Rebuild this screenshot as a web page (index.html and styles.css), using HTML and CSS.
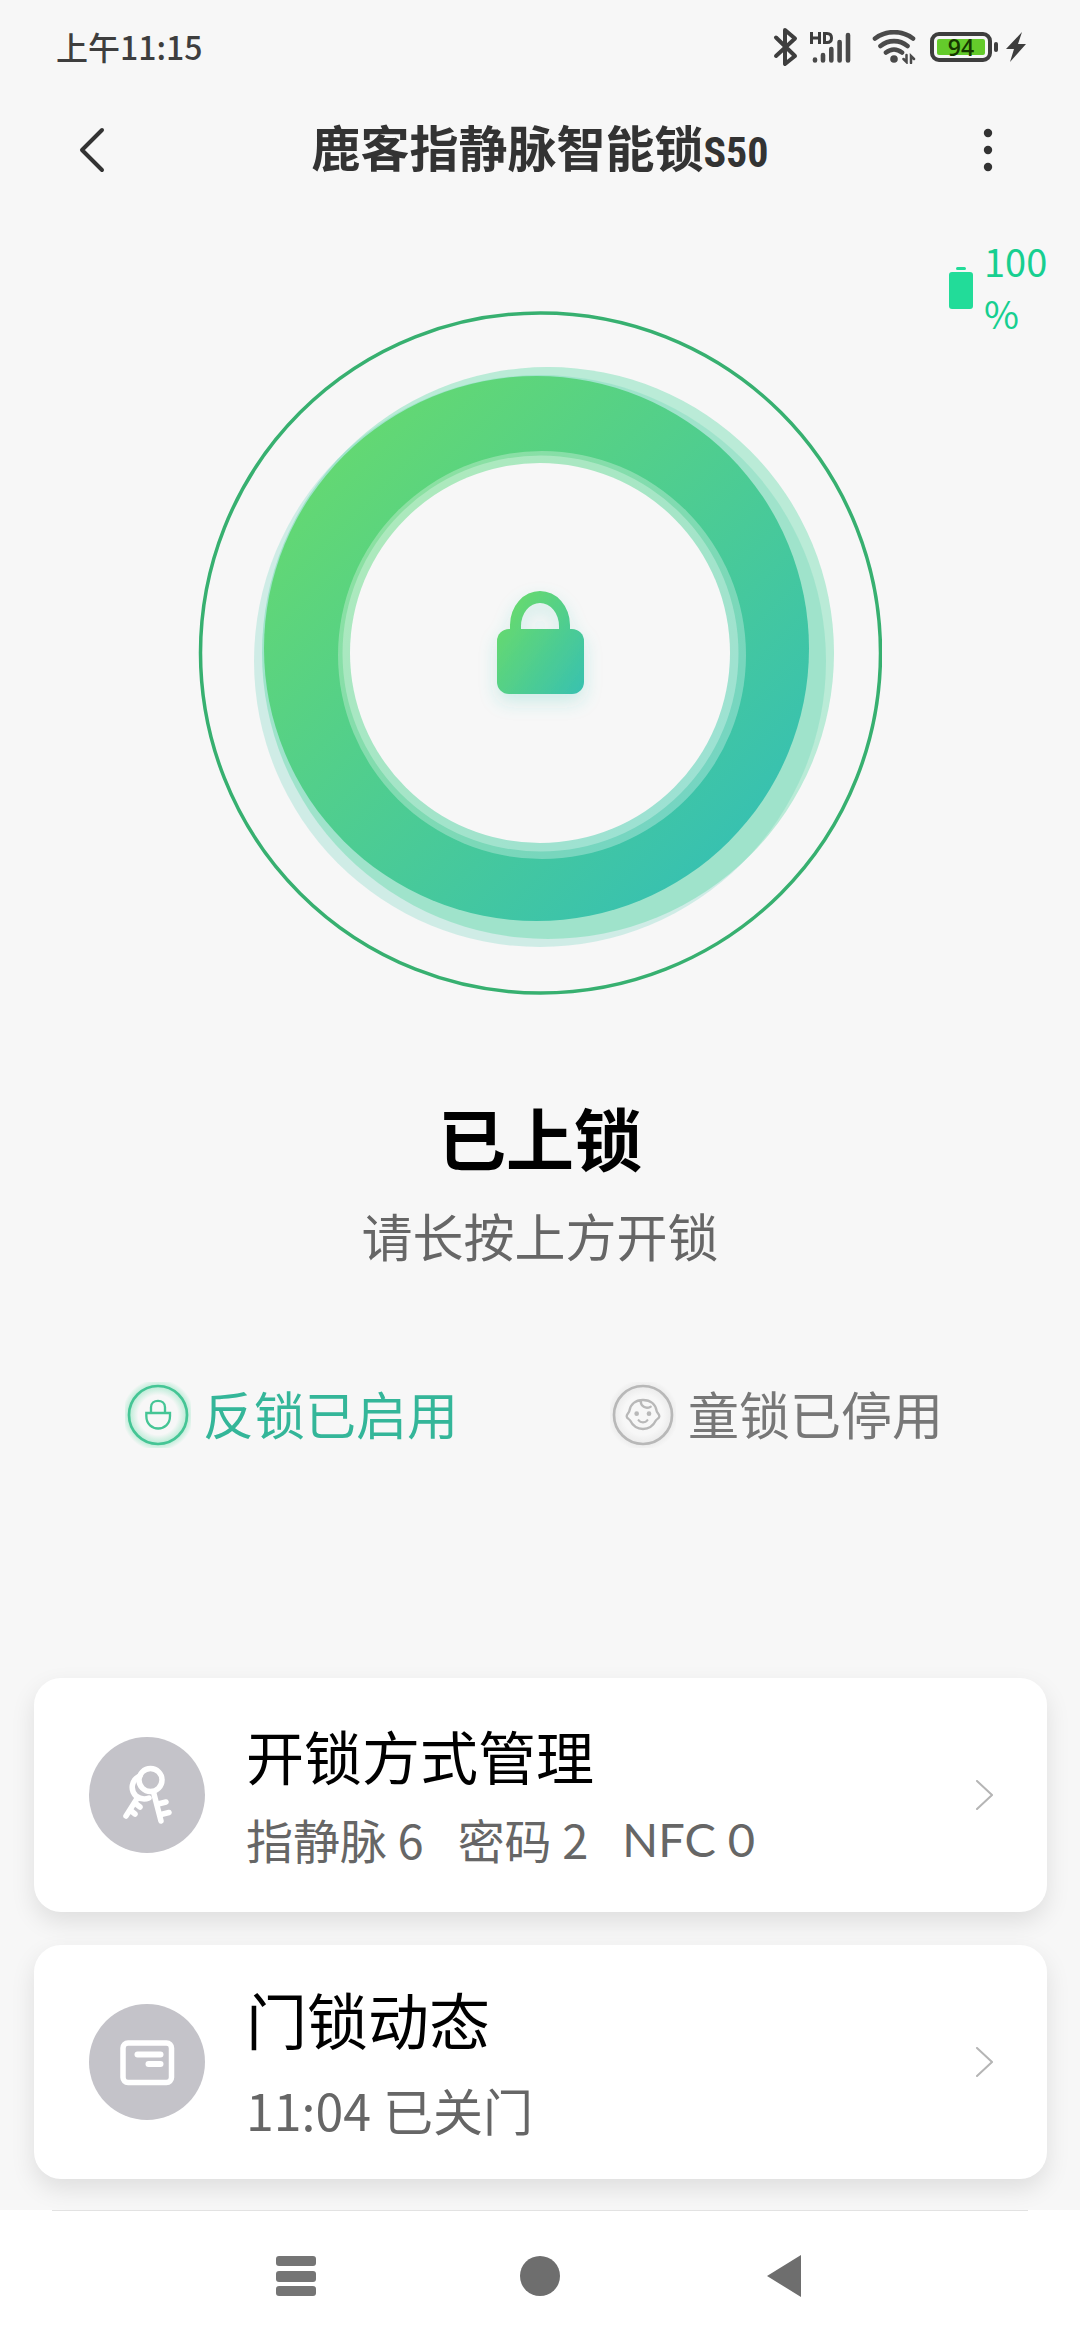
FILE: index.html
```html
<!DOCTYPE html>
<html lang="zh-CN">
<head>
<meta charset="utf-8">
<meta name="viewport" content="width=device-width, initial-scale=1">
<title>鹿客指静脉智能锁S50</title>
<link rel="stylesheet" href="styles.css">
</head>
<body>
<div class="screen">
  <div class="status-bar">
    <span class="clock">上午11:15</span>
    <div class="status-icons">
      <svg class="bluetooth" width="26" height="40" viewBox="0 0 26 40" fill="none" stroke="#3e3e3e" stroke-width="4" stroke-linejoin="round" stroke-linecap="round"><path d="M3 10.500L22 29 12 37V3l10 8.500L3 29"/></svg>
      <svg class="signal" width="42" height="34" viewBox="0 0 42 34"><g fill="none" stroke="#3e3e3e" stroke-width="3"><path d="M2.500 2v12M10.500 2v12M2.500 8h8M15.500 3.500h2.500c4 0 4.500 3 4.500 4.500s-.5 4.500-4.500 4.500h-2.500z"/></g><g fill="none" stroke="#4a4a4a" stroke-width="4.600" stroke-linecap="round"><path d="M6 29.500v1M14 25v5.500M22.300 19v11.500M30.600 12v18.500M39 5v25.500"/></g></svg>
      <svg class="wifi" width="44" height="34" viewBox="0 0 44 34" fill="none" stroke="#4a4a4a" stroke-width="4.600" stroke-linecap="round"><path d="M3 8.500C14 0 30 0 41 8.500M8.500 16c8-6.500 19-6.500 27 0M14 22.500c5-4 11-4 16 0"/><circle cx="22" cy="29" r="3.800" fill="#4a4a4a" stroke="none"/><path d="M34.500 25v7l-3-3M39 33v-7l3 3" stroke-width="2.500"/></svg>
      <div class="phone-battery"><span class="phone-battery-level">94</span></div>
      <svg class="bolt" width="20" height="30" viewBox="0 0 20 30" fill="#3e3e3e"><path d="M16 0L0 17h8L4 30 20 12h-8z"/></svg>
    </div>
  </div>

  <header class="header">
    <button class="icon-button" type="button" aria-label="返回">
      <svg width="28" height="48" viewBox="0 0 28 48" fill="none" stroke="#333" stroke-width="4" stroke-linecap="round" stroke-linejoin="round"><path d="M24 4L4 24l20 20"/></svg>
    </button>
    <h1 class="title">鹿客指静脉智能锁<span class="model">S50</span></h1>
    <button class="icon-button" type="button" aria-label="更多">
      <svg width="10" height="44" viewBox="0 0 10 44" fill="#333"><circle cx="5" cy="5" r="4.200"/><circle cx="5" cy="22" r="4.200"/><circle cx="5" cy="39" r="4.200"/></svg>
    </button>
  </header>

  <main>
    <section class="hero">
      <button class="lock-button" type="button" aria-label="长按开锁">
        <svg class="ring" viewBox="0 0 684 684">
          <defs>
            <linearGradient id="disc" x1="0.140" y1="0.140" x2="0.860" y2="0.860"><stop offset="0" stop-color="#63d873"/><stop offset="1" stop-color="#38c1b0"/></linearGradient>
            <linearGradient id="lock" gradientUnits="userSpaceOnUse" x1="300" y1="325" x2="384" y2="384"><stop offset="0" stop-color="#63d873"/><stop offset="1" stop-color="#38c1b0"/></linearGradient>
            <filter id="glow" x="-50%" y="-50%" width="200%" height="200%"><feDropShadow dx="0" dy="8" stdDeviation="9" flood-color="#38c1b0" flood-opacity="0.220"/></filter>
          </defs>
          <circle cx="342.500" cy="342" r="340" fill="none" stroke="#37b070" stroke-width="3.500"/>
          <circle cx="342" cy="350" r="286" fill="#3cc4ac" fill-opacity="0.210"/>
          <circle cx="350" cy="342" r="286" fill="#43d299" fill-opacity="0.340"/>
          <circle cx="338.500" cy="337.500" r="272.500" fill="url(#disc)"/>
          <circle cx="344" cy="344" r="204" fill="#fff" fill-opacity="0.290"/>
          <circle cx="342.500" cy="342.500" r="198" fill="#fff" fill-opacity="0.290"/>
          <circle cx="342" cy="342" r="190" fill="#f7f7f7"/>
          <g fill="url(#lock)" filter="url(#glow)">
            <path d="M312 322v-8a30 34 0 0 1 60 0v8h-11v-7a19 23 0 0 0-38 0v7z"/>
            <rect x="299" y="318" width="87" height="65" rx="12"/>
          </g>
        </svg>
      </button>
      <div class="lock-battery">
        <svg width="24" height="42" viewBox="0 0 24 42" fill="#22dc99"><rect x="7" y="0" width="10" height="3" rx="1.500"/><rect y="5" width="24" height="37" rx="3"/></svg>
        <span class="lock-battery-text">100 %</span>
      </div>
    </section>

    <h2 class="state">已上锁</h2>
    <p class="hint">请长按上方开锁</p>

    <div class="modes">
      <div class="mode mode-on">
        <svg class="mode-icon" viewBox="0 0 198 198" fill="none" stroke="#45c595" stroke-width="8">
          <defs><radialGradient id="halo-on"><stop offset="0.550" stop-color="#45d596" stop-opacity="0"/><stop offset="0.800" stop-color="#45d596" stop-opacity="0.350"/><stop offset="1" stop-color="#45d596" stop-opacity="0"/></radialGradient></defs>
          <circle cx="99" cy="99" r="108" fill="url(#halo-on)" stroke="none"/>
          <circle cx="99" cy="99" r="87"/>
          <path stroke-width="7" d="M78 91V76c0-26 42-26 42 0v15M64 93h71v9c0 50-71 50-71 0z"/>
        </svg>
        <span>反锁已启用</span>
      </div>
      <div class="mode mode-off">
        <svg class="mode-icon" viewBox="0 0 198 198" fill="none" stroke="#b8b8b8" stroke-width="8">
          <defs><radialGradient id="halo-off"><stop offset="0.550" stop-color="#bbb" stop-opacity="0"/><stop offset="0.800" stop-color="#bbb" stop-opacity="0.200"/><stop offset="1" stop-color="#bbb" stop-opacity="0"/></radialGradient></defs>
          <circle cx="99" cy="99" r="108" fill="url(#halo-off)" stroke="none"/>
          <circle cx="99" cy="99" r="87"/>
          <g stroke-width="7" stroke-linecap="round"><path d="M99 54c-24 0-38 14-41 33-1 6-8 9-8 16s7 7 10 12c8 16 22 26 39 26s31-10 39-26c3-5 10-5 10-12s-7-10-8-16c-3-19-17-33-41-33zM92 56c0 17 15 26 30 18M86 115c6 8 20 8 26 0"/></g>
          <g fill="#b8b8b8" stroke="none"><circle cx="80" cy="95" r="7"/><circle cx="117" cy="95" r="7"/></g>
        </svg>
        <span>童锁已停用</span>
      </div>
    </div>

    <nav class="cards">
      <a class="card" href="#unlock-methods">
        <svg class="card-icon" viewBox="0 0 116 116" fill="none" stroke="#fff" stroke-width="5.500" stroke-linecap="round" stroke-linejoin="round">
          <circle cx="58" cy="58" r="58" fill="#c4c3c9" stroke="none"/>
          <path d="M51 39c-9 4-10 14-4 20 4 3 8 4 13 2M49 60L37 79M41 73l5 4M46 66l5 4M65 57l7 27M69 67l8-2M72 77.500l8-2"/>
          <circle cx="61.500" cy="43" r="11.500"/>
        </svg>
        <span class="card-text">
          <span class="card-title">开锁方式管理</span>
          <span class="card-sub"><span>指静脉 6</span><span>密码 2</span><span class="latin">NFC 0</span></span>
        </span>
        <svg class="chevron" viewBox="0 0 18 30" fill="none" stroke="#b5b5b5" stroke-width="2" stroke-linecap="round"><path d="M2 1l15 14L2 29"/></svg>
      </a>
      <a class="card card-large" href="#activity">
        <svg class="card-icon" viewBox="0 0 116 116">
          <circle cx="58" cy="58" r="58" fill="#c4c3c9"/>
          <rect x="34" y="39" width="48.500" height="39.500" rx="5" fill="none" stroke="#fff" stroke-width="5.500"/>
          <rect x="45.500" y="47.500" width="29" height="6" rx="3" fill="#fff"/><rect x="56.500" y="57" width="18" height="6" rx="3" fill="#fff"/>
        </svg>
        <span class="card-text">
          <span class="card-title">门锁动态</span>
          <span class="card-sub"><span>11:04</span><span>已关门</span></span>
        </span>
        <svg class="chevron" viewBox="0 0 18 30" fill="none" stroke="#b5b5b5" stroke-width="2" stroke-linecap="round"><path d="M2 1l15 14L2 29"/></svg>
      </a>
    </nav>
  </main>

  <footer class="system-nav">
    <div class="system-nav-line"></div>
    <div class="system-nav-keys">
      <button class="icon-button" type="button" aria-label="最近任务"><svg width="40" height="40" viewBox="0 0 40 40" fill="#757575"><rect width="40" height="10" rx="3"/><rect y="15" width="40" height="11" rx="3"/><rect y="30" width="40" height="10" rx="3"/></svg></button>
      <button class="icon-button" type="button" aria-label="主屏幕"><svg width="40" height="40" viewBox="0 0 40 40" fill="#6e6e6e"><circle cx="20" cy="20" r="20"/></svg></button>
      <button class="icon-button" type="button" aria-label="返回上一页"><svg width="34" height="42" viewBox="0 0 34 42" fill="#6e6e6e"><path d="M0 21L34 0v42z"/></svg></button>
    </div>
  </footer>
</div>
</body>
</html>
```

FILE: styles.css
```css
* {
  box-sizing: border-box;
}

body {
  margin: 0;
  background: #f7f7f7;
  color: #000;
  font-family: "Noto Sans CJK SC", sans-serif;
}

.screen {
  display: flex;
  flex-direction: column;
  min-height: 100vh;
}

main {
  flex: 1;
}

svg {
  display: block;
  flex: none;
}

.icon-button {
  display: flex;
  align-items: center;
  justify-content: center;
  padding: 0;
  border: 0;
  background: none;
}

.status-bar {
  display: flex;
  align-items: center;
  justify-content: space-between;
  height: 94px;
  padding: 0 54px 0 56px;
}

.clock {
  color: #3e3e3e;
  font-size: 32px;
  font-weight: 500;
  line-height: 48px;
  padding-bottom: 2px;
}

.status-icons {
  display: flex;
  align-items: center;
}

.signal {
  margin-left: 10px;
}

.wifi {
  margin-left: 21px;
}

.phone-battery {
  position: relative;
  display: flex;
  width: 62px;
  height: 30px;
  margin: 0 14px;
  padding: 3px;
  border: 4px solid #3e3e3e;
  border-radius: 9px;
}

.phone-battery::after {
  content: "";
  position: absolute;
  top: 6px;
  right: -10px;
  width: 4px;
  height: 10px;
  border-radius: 2px;
  background: #3e3e3e;
}

.phone-battery-level {
  flex: 1;
  border-radius: 2px;
  background: #64cb2b;
  color: #163800;
  font-family: "Open Sans", sans-serif;
  font-size: 23px;
  font-weight: 600;
  line-height: 17px;
  text-align: center;
}

.header {
  display: grid;
  grid-template-columns: 184px 1fr 184px;
  align-items: center;
  height: 112px;
}

.title {
  margin: 0;
  padding-bottom: 2px;
  color: #333;
  font-size: 49px;
  font-weight: 700;
  line-height: 72px;
  text-align: center;
  white-space: nowrap;
}

.model {
  font-family: "Roboto Condensed", Roboto, sans-serif;
  font-size: 42px;
}

.hero {
  display: grid;
  grid-template-columns: 1fr 684px 1fr;
  padding-top: 29px;
}

.lock-button {
  grid-column: 2;
  margin: 76px 0 0;
  padding: 0;
  border: 0;
  background: none;
}

.ring {
  width: 100%;
}

.lock-battery {
  grid-column: 3;
  display: flex;
  align-items: center;
  align-self: start;
  justify-content: flex-end;
  gap: 11px;
  padding-right: 28px;
  color: #17cf90;
}

.lock-battery-text {
  width: 68px;
  padding-bottom: 2px;
  font-size: 38px;
  line-height: 52px;
}

.state {
  margin: 100px 0 0;
  font-size: 68px;
  font-weight: 700;
  line-height: 84px;
  text-align: center;
}

.hint {
  margin: 26px 0 0;
  color: #666;
  font-size: 51px;
  line-height: 60px;
  text-align: center;
}

.modes {
  display: flex;
  justify-content: center;
  gap: 152px;
  margin-top: 117px;
  padding-right: 12px;
  font-size: 51px;
  line-height: 62px;
}

.mode {
  display: flex;
  align-items: center;
  gap: 12px;
}

.mode span {
  padding-bottom: 4px;
}

.mode-on {
  color: #34b699;
}

.mode-off {
  color: #777;
}

.mode-icon {
  width: 66px;
  height: 66px;
}

.cards {
  display: flex;
  flex-direction: column;
  gap: 33px;
  margin-top: 230px;
  padding: 0 33px 31px 34px;
}

.card {
  display: flex;
  align-items: center;
  min-height: 234px;
  padding: 4px 54px 0 55px;
  border-radius: 27px;
  background: #fff;
  box-shadow: 0 10px 24px rgba(0, 0, 0, 0.1);
  color: #000;
  text-decoration: none;
}

.card-icon {
  width: 116px;
  height: 116px;
  margin-bottom: 4px;
}

.card-text {
  display: flex;
  flex: 1;
  flex-direction: column;
  margin-left: 41px;
}

.card-title {
  font-size: 58px;
  line-height: 84px;
}

.card-sub {
  display: flex;
  gap: 34px;
  color: #666;
  font-size: 47px;
  line-height: 84px;
}

.latin {
  font-family: Lato, "Noto Sans CJK SC", sans-serif;
}

.card-large .card-title {
  font-size: 61px;
  line-height: 90px;
}

.card-large .card-sub {
  gap: 12px;
  font-size: 50px;
  line-height: 90px;
}

.chevron {
  width: 18px;
  height: 30px;
  margin-bottom: 4px;
}

.system-nav {
  background: #fff;
}

.system-nav-line {
  height: 1px;
  margin: 0 52px;
  background: #e2e2e2;
}

.system-nav-keys {
  display: grid;
  grid-template-columns: repeat(3, 244px);
  justify-content: center;
  height: 129px;
}
```
